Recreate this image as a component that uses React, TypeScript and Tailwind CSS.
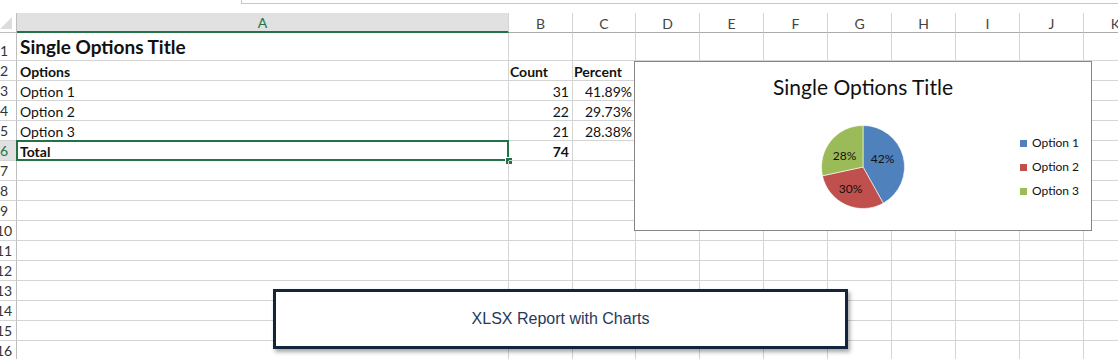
import React from 'react';

const cols = [
  { l: 'A', w: 492 },
  { l: 'B', w: 64 },
  { l: 'C', w: 63 },
  { l: 'D', w: 64 },
  { l: 'E', w: 64 },
  { l: 'F', w: 64 },
  { l: 'G', w: 64 },
  { l: 'H', w: 64 },
  { l: 'I', w: 64 },
  { l: 'J', w: 64 },
  { l: 'K', w: 64 },
];

type Cell = { t: string; bold?: boolean; right?: boolean; big?: boolean };

const rows: { h: number; cells: (Cell | null)[] }[] = [
  { h: 28, cells: [{ t: 'Single Options Title', bold: true, big: true }] },
  { h: 20, cells: [{ t: 'Options', bold: true }, { t: 'Count', bold: true }, { t: 'Percent', bold: true }] },
  { h: 20, cells: [{ t: 'Option 1' }, { t: '31', right: true }, { t: '41.89%', right: true }] },
  { h: 20, cells: [{ t: 'Option 2' }, { t: '22', right: true }, { t: '29.73%', right: true }] },
  { h: 20, cells: [{ t: 'Option 3' }, { t: '21', right: true }, { t: '28.38%', right: true }] },
  { h: 20, cells: [{ t: 'Total', bold: true }, { t: '74', bold: true, right: true }] },
];

const legend = [
  { name: 'Option 1', color: 'bg-[#4f81bd]' },
  { name: 'Option 2', color: 'bg-[#c0504d]' },
  { name: 'Option 3', color: 'bg-[#9bbb59]' },
];

function PieChart() {
  return (
    <svg width="84" height="84" viewBox="0 0 84 84">
      <path d="M42,42 L42,0.5 A41.5,41.5 0 0 1 62.25,78.23 Z" fill="#4f81bd" stroke="#fff" strokeWidth="0.6" />
      <path d="M42,42 L62.25,78.23 A41.5,41.5 0 0 1 1.44,50.77 Z" fill="#c0504d" stroke="#fff" strokeWidth="0.6" />
      <path d="M42,42 L1.44,50.77 A41.5,41.5 0 0 1 42,0.5 Z" fill="#9bbb59" stroke="#fff" strokeWidth="0.6" />
      <g fontFamily="Lato, 'Liberation Sans', sans-serif" fontSize="12" fill="#111" textAnchor="middle">
        <text x="61.5" y="38">42%</text>
        <text x="29.5" y="67.5">30%</text>
        <text x="23.5" y="35">28%</text>
      </g>
    </svg>
  );
}

export default function App() {
  const allRows = [...rows];
  for (let i = 7; i <= 16; i++) allRows.push({ h: 20, cells: [] });

  return (
    <div className="relative w-[1118px] h-[359px] overflow-hidden bg-white text-[#111]" style={{ fontFamily: 'Lato, "Liberation Sans", sans-serif' }}>
      {/* formula bar edge */}
      <div className="flex h-[13px]">
        <div className="w-[241px]" />
        <div className="flex-1 h-[4px] border-l border-b border-[#c6c6c6]" />
      </div>

      {/* column headers */}
      <div className="flex h-[20px] ml-[-8px]">
        <div className="relative w-[25px] shrink-0 border-r border-b border-[#bdbdbd]">
          <svg className="absolute right-[4px] bottom-[3px]" width="12" height="12" viewBox="0 0 12 12">
            <polygon points="12,0 12,12 0,12" fill="#dcdcdc" />
          </svg>
        </div>
        {cols.map((c) => (
          <div
            key={c.l}
            style={{ width: c.w }}
            className={`shrink-0 flex items-center justify-center pt-[1px] text-[14px] border-r border-[#d4d4d4] ${
              c.l === 'A' ? 'bg-[#e1e1e1] text-[#217346] border-b-2 border-b-[#217346]' : 'text-[#444] border-b border-b-[#ababab]'
            }`}
          >
            {c.l}
          </div>
        ))}
      </div>

      {/* rows */}
      {allRows.map((r, ri) => {
        const n = ri + 1;
        const sel = n === 6;
        return (
          <div key={n} className="flex ml-[-8px]" style={{ height: r.h }}>
            <div
              className={`w-[25px] shrink-0 flex items-end justify-center pb-[1px] leading-[17px] text-[14px] border-r border-b border-r-[#bdbdbd] border-b-[#d4d4d4] ${
                sel ? 'bg-[#e1e1e1] text-[#217346]' : 'text-[#333]'
              }`}
            >
              {n}
            </div>
            {cols.map((c, ci) => {
              const cell = r.cells[ci];
              return (
                <div
                  key={c.l}
                  style={{ width: c.w }}
                  className={`relative shrink-0 flex items-end border-r border-b border-[#d4d4d4] whitespace-nowrap ${
                    cell?.right ? 'justify-end pr-[3px]' : ci === 0 ? 'pl-[3px]' : 'pl-[1px]'
                  } ${cell?.big ? 'text-[19px] leading-[24px] pb-[1px]' : 'text-[14px] leading-[17px] pb-0'} ${cell?.bold ? 'font-bold' : ''}`}
                >
                  {cell?.t}
                  {sel && ci === 0 && (
                    <>
                      <div className="absolute left-[-1px] top-[-1px] right-[-1px] bottom-[-1px] border-2 border-[#217346]" />
                      <div className="absolute right-[-5px] bottom-[-5px] w-[8px] h-[8px] bg-[#217346] border border-white" />
                    </>
                  )}
                </div>
              );
            })}
          </div>
        );
      })}

      {/* chart */}
      <div className="absolute left-[634px] top-[61px] w-[458px] h-[170px] bg-white border border-[#868686] flex flex-col">
        <div className="h-[39px] pt-[11px] text-center text-[21px] leading-[28px] text-[#111]">Single Options Title</div>
        <div className="flex items-start">
          <div className="ml-[186px] mt-[24px]">
            <PieChart />
          </div>
          <div className="ml-[115px] mt-[35px] flex flex-col gap-[10px]">
            {legend.map((l) => (
              <div key={l.name} className="flex items-center gap-[5px] h-[14px] text-[12px] text-[#111]">
                <span className={`w-[7px] h-[7px] ${l.color}`} />
                {l.name}
              </div>
            ))}
          </div>
        </div>
      </div>

      {/* button */}
      <div
        className="absolute left-[273px] top-[289px] w-[575px] h-[60px] bg-white border-[3px] border-[#13243d] shadow-[2px_3px_4px_rgba(0,0,0,0.35)] flex items-center justify-center text-[16px] text-[#27395a]"
        style={{ fontFamily: '"Liberation Sans", Arial, sans-serif' }}
      >
        XLSX Report with Charts
      </div>
    </div>
  );
}
